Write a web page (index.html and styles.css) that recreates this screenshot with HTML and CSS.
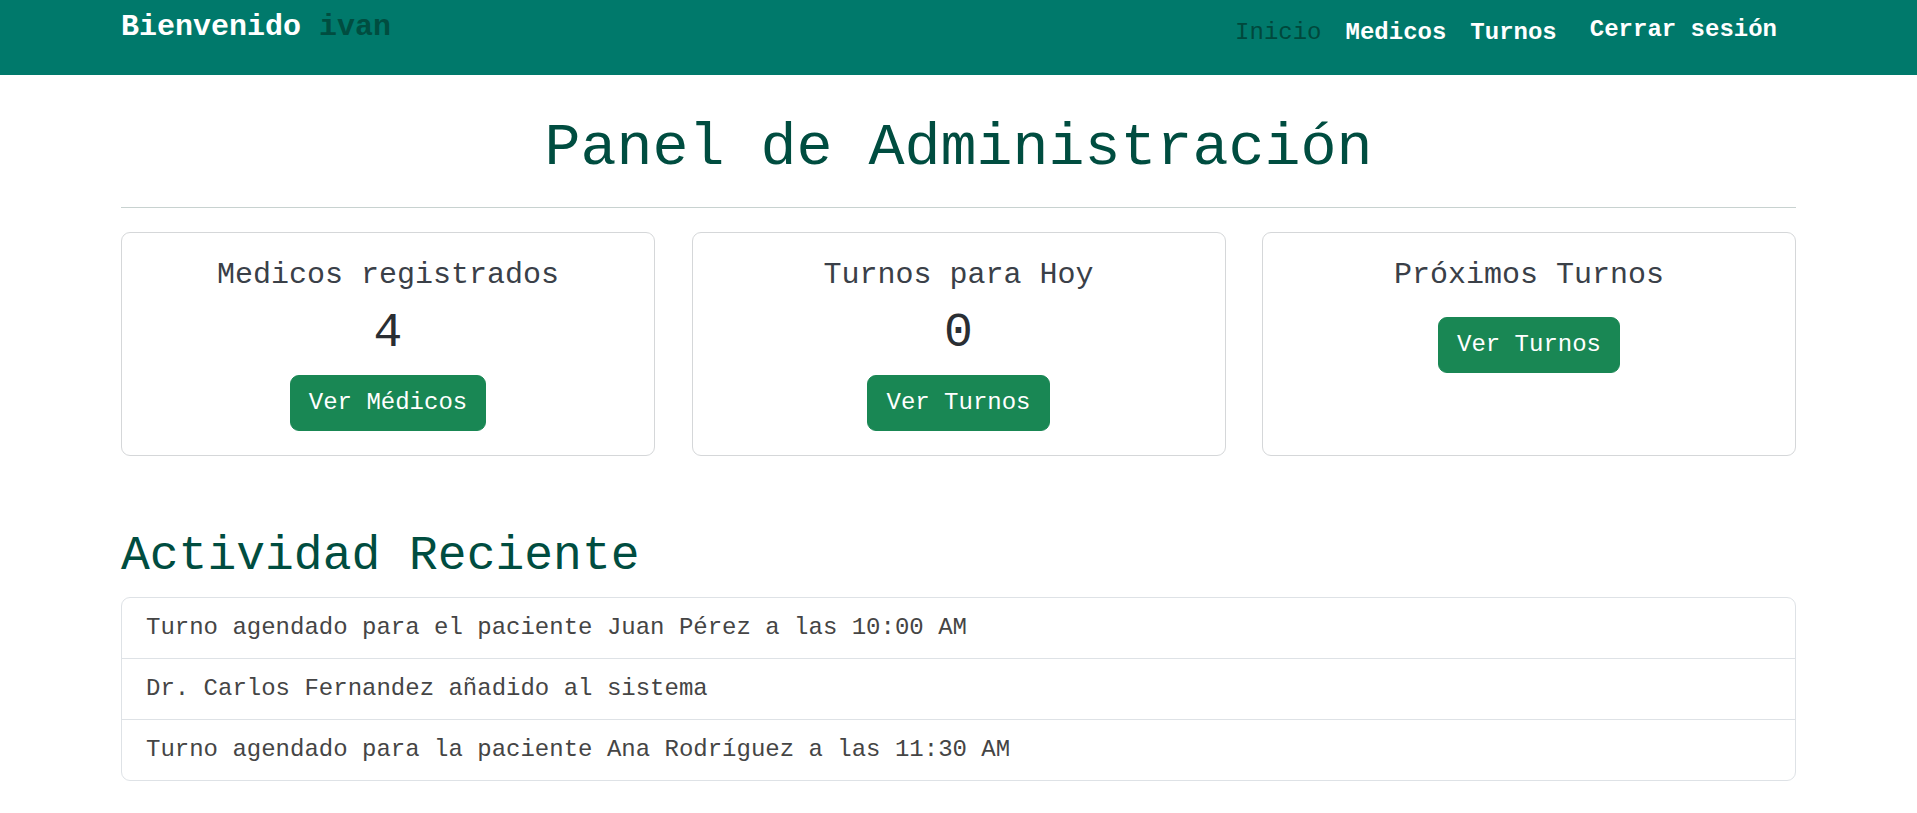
FILE: index.html
```html
<!DOCTYPE html>
<html lang="es">
<head>
<meta charset="utf-8">
<title>Panel de Administración</title>
<link rel="stylesheet" href="styles.css">
</head>
<body>
<nav class="navbar">
  <div class="container nav-inner">
    <div class="brand">Bienvenido <span class="brand-user">ivan</span></div>
    <div class="nav">
      <a class="nav-link active" href="#">Inicio</a>
      <a class="nav-link" href="#">Medicos</a>
      <a class="nav-link" href="#">Turnos</a>
      <a class="nav-link logout" href="#">Cerrar sesión</a>
    </div>
  </div>
</nav>
<main class="container">
  <h1 class="page-title">Panel de Administración</h1>
  <hr class="divider">
  <div class="cards">
    <div class="card">
      <h5 class="card-title">Medicos registrados</h5>
      <p class="card-number">4</p>
      <a class="btn" href="#">Ver Médicos</a>
    </div>
    <div class="card">
      <h5 class="card-title">Turnos para Hoy</h5>
      <p class="card-number">0</p>
      <a class="btn" href="#">Ver Turnos</a>
    </div>
    <div class="card">
      <h5 class="card-title card-title-lg">Próximos Turnos</h5>
      <a class="btn" href="#">Ver Turnos</a>
    </div>
  </div>
  <h2 class="section-title">Actividad Reciente</h2>
  <ul class="list">
    <li class="list-item">Turno agendado para el paciente Juan Pérez a las 10:00 AM</li>
    <li class="list-item">Dr. Carlos Fernandez añadido al sistema</li>
    <li class="list-item">Turno agendado para la paciente Ana Rodríguez a las 11:30 AM</li>
  </ul>
</main>
</body>
</html>
```
FILE: styles.css
```css
* { box-sizing: border-box; }
body {
  margin: 0;
  font-family: "Liberation Mono", "Courier New", monospace;
  color: #212529;
  background: #fff;
}
.container {
  max-width: 1675px;
  margin: 0 auto;
}
.navbar {
  background: #00796b;
  height: 75px;
}
.nav-inner {
  display: flex;
  justify-content: space-between;
  align-items: flex-start;
}
.brand {
  font-size: 30px;
  line-height: 36px;
  font-weight: bold;
  color: #fff;
  padding-top: 9px;
}
.brand-user { color: #004d40; }
.nav {
  display: flex;
  align-items: flex-start;
}
.nav-link {
  font-size: 24px;
  line-height: 36px;
  padding: 15px 12px 0;
  font-weight: bold;
  color: #fff;
  text-decoration: none;
}
.nav-link.active {
  color: #00483c;
  font-weight: normal;
}
.nav-link.logout {
  padding: 12px 19px 0 21px;
}
.page-title {
  margin: 37px 0 0;
  font-size: 60px;
  line-height: 72px;
  font-weight: normal;
  text-align: center;
  color: #004d40;
}
.divider {
  margin: 23px 0 24px;
  border: 0;
  border-top: 1.5px solid #c8d2d0;
}
.cards {
  display: grid;
  grid-template-columns: repeat(3, 1fr);
  gap: 36.5px;
}
.card {
  border: 1px solid #d5d7d9;
  border-radius: 9px;
  padding: 24px;
  text-align: center;
}
.card-title {
  margin: 0 0 12px;
  font-size: 30px;
  line-height: 36px;
  font-weight: normal;
  color: #3a4048;
}
.card-title-lg { margin-bottom: 24px; }
.card-number {
  margin: 0 0 12px;
  font-size: 48px;
  line-height: 57.6px;
  color: #2a2e33;
}
.btn {
  display: inline-block;
  background: #198754;
  border: 1.5px solid #198754;
  border-radius: 9px;
  color: #fff;
  font-size: 24px;
  line-height: 36px;
  padding: 9px 18px;
  text-decoration: none;
}
.section-title {
  margin: 72px 0 12px;
  font-size: 48px;
  line-height: 57.6px;
  font-weight: normal;
  color: #004d40;
}
.list {
  list-style: none;
  margin: 0;
  padding: 0;
  border: 1px solid #dee2e6;
  border-radius: 9px;
}
.list-item {
  font-size: 24px;
  line-height: 36px;
  padding: 12px 24px;
  color: #454545;
}
.list-item + .list-item {
  border-top: 1px solid #dee2e6;
}
```
